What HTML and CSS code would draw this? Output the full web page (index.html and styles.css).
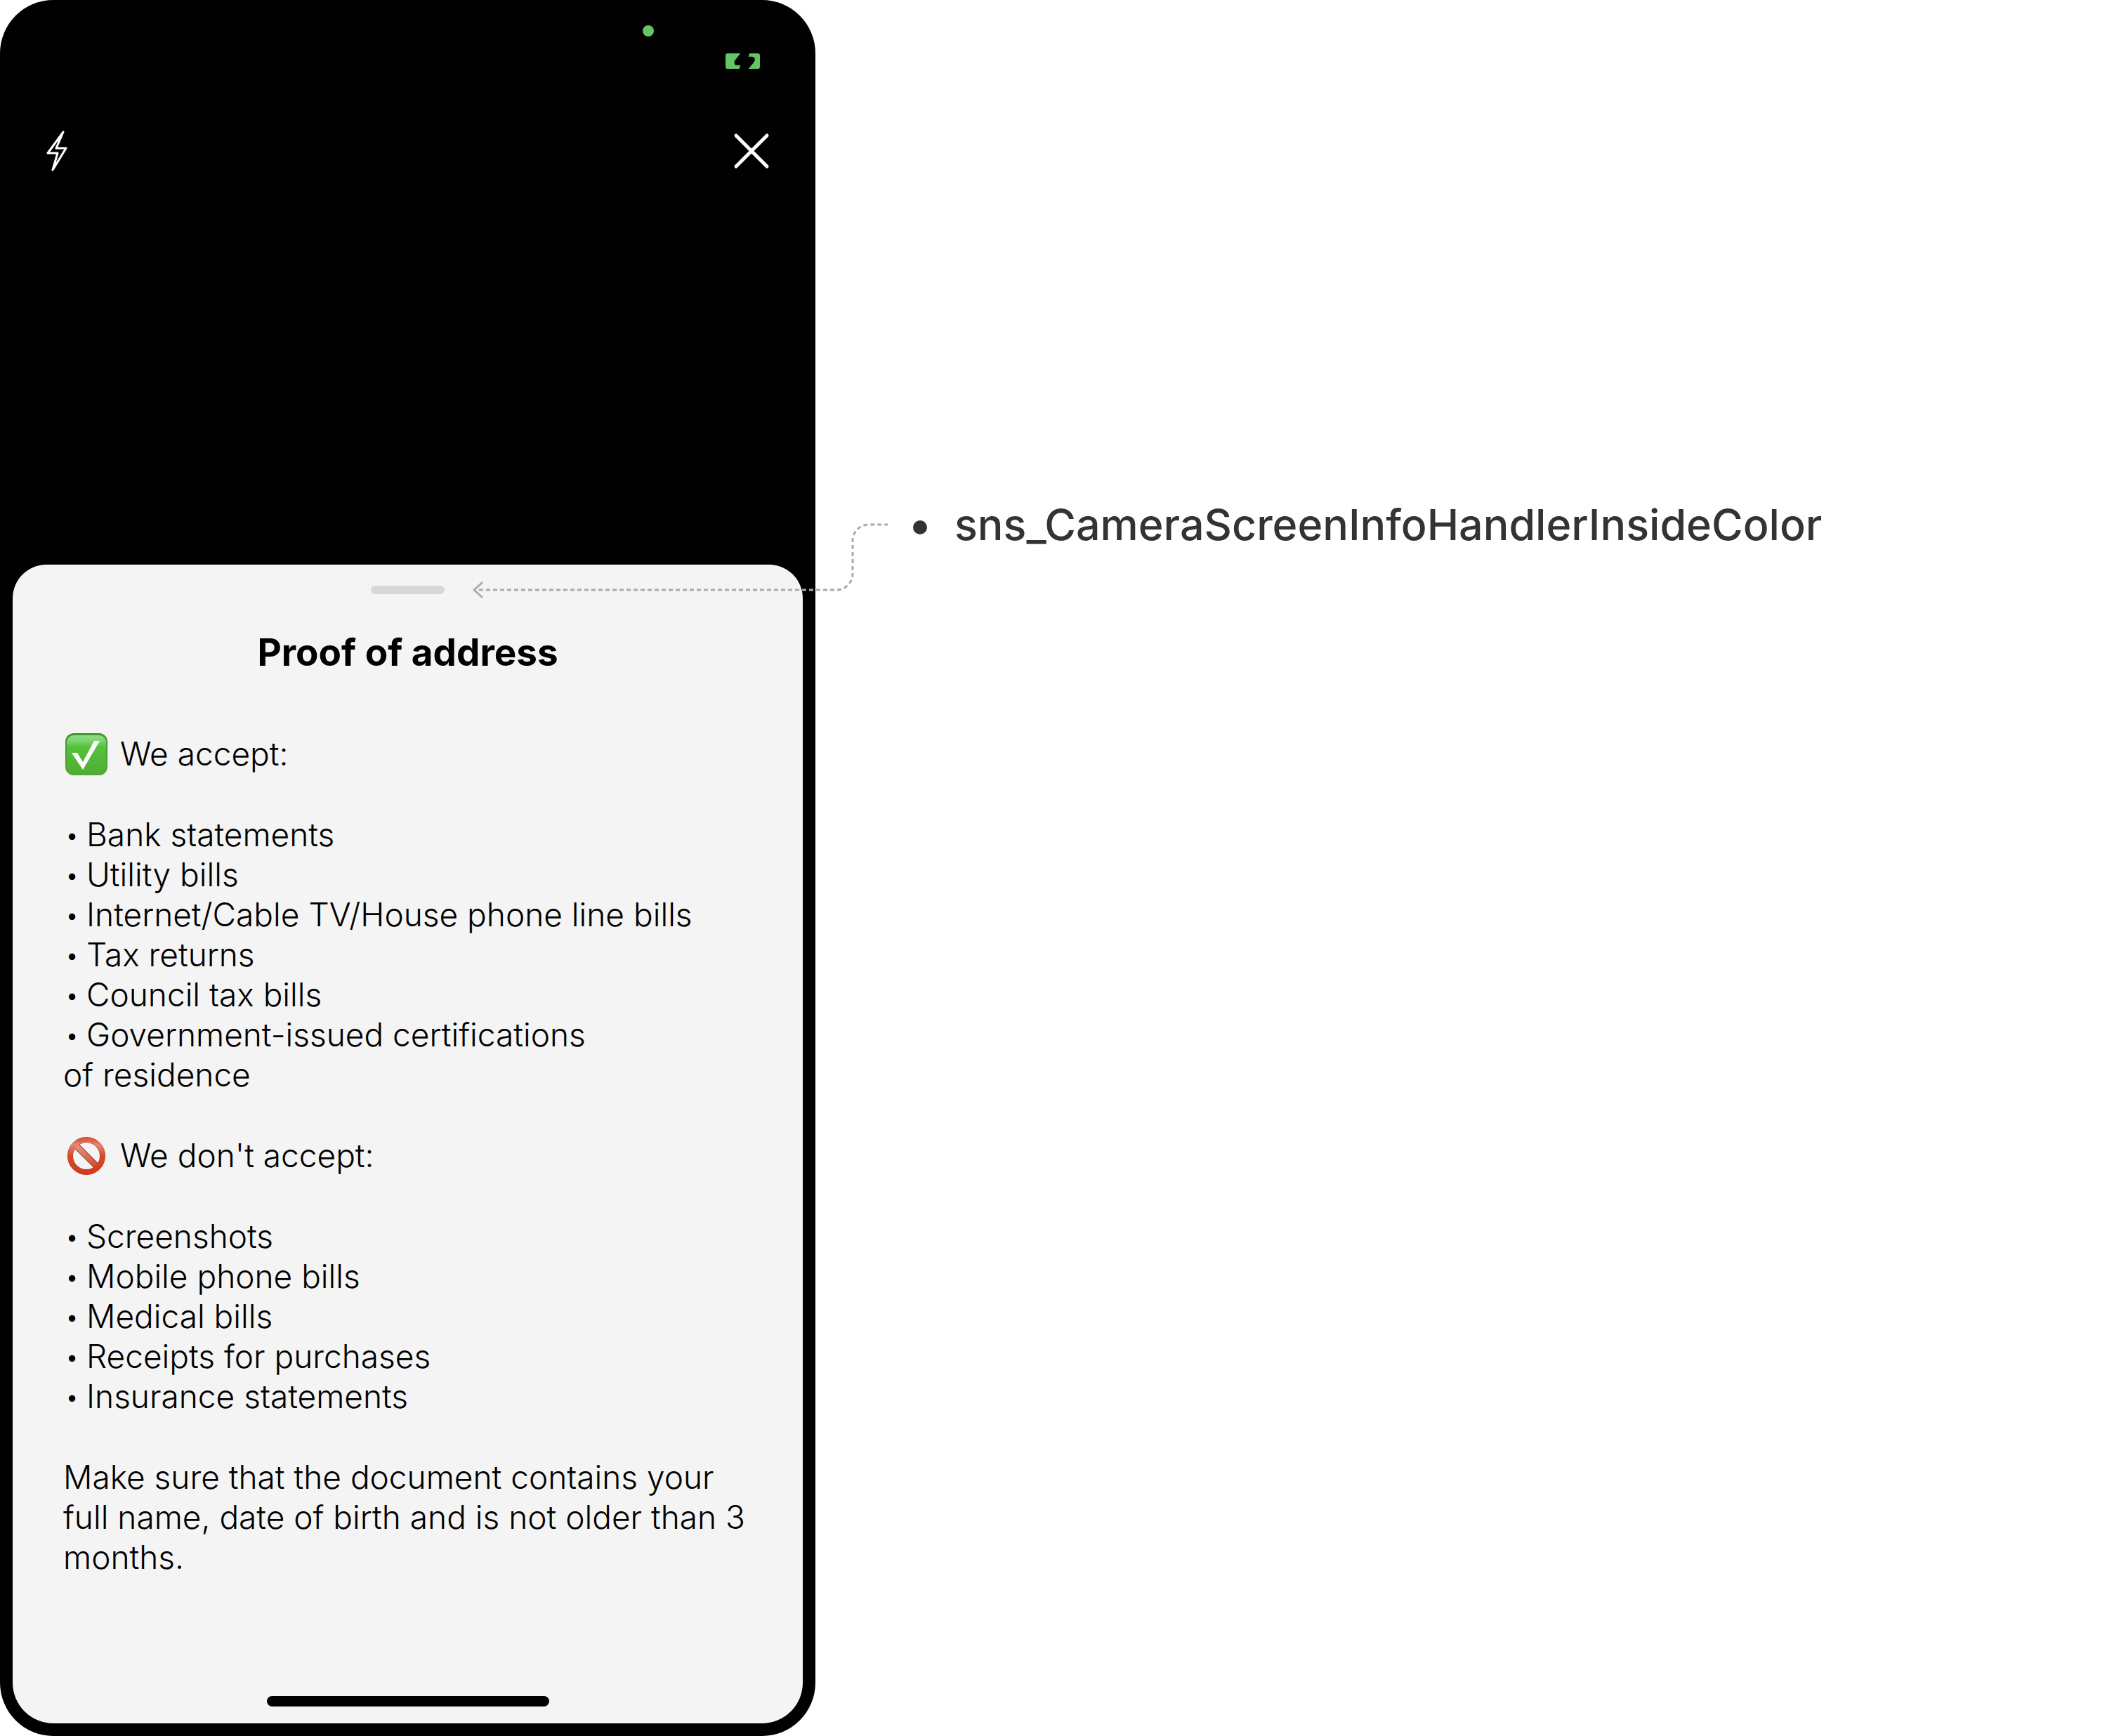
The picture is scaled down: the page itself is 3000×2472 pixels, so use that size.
FILE: index.html
```html
<!DOCTYPE html>
<html lang="en">
<head>
<meta charset="utf-8">
<title>Proof of address</title>
<link rel="stylesheet" href="styles.css">
</head>
<body>
<main class="page">
  <section class="phone">
    <header class="camera">
      <span class="camera-dot"></span>
      <svg class="battery" viewBox="0 0 147 66" aria-hidden="true">
        <path d="M10 0H64L41 29C34 39 38 51 50 51H64L59 66H10Q0 66 0 56V10Q0 0 10 0Z"/>
        <path d="M103 0H137Q147 0 147 10V56Q147 66 137 66H98L121 38C130 27 126 14 112 14H98Z"/>
      </svg>
      <div class="toolbar">
        <button class="tool" type="button" aria-label="Flash">
          <svg class="flash" viewBox="0 0 30 58" aria-hidden="true"><path d="M24 2L2 32H16L9 56L28 25H14Z"/></svg>
        </button>
        <button class="tool" type="button" aria-label="Close">
          <svg class="close" viewBox="0 0 48 48" aria-hidden="true"><path d="M2 2L46 46M46 2L2 46"/></svg>
        </button>
      </div>
    </header>
    <article class="sheet">
      <div class="handle"></div>
      <h1 class="title">Proof of address</h1>
      <div class="info">
        <h2 class="lead">
          <svg class="mark" viewBox="0 0 60 60" aria-hidden="true">
            <defs>
              <linearGradient id="green" x1="0" y1="0" x2="0" y2="1">
                <stop offset="0" stop-color="#8fdd84"/><stop offset=".14" stop-color="#7ed572"/><stop offset=".3" stop-color="#55c13b"/><stop offset="1" stop-color="#4fae32"/>
              </linearGradient>
              <linearGradient id="rim" x1="0" y1="0" x2="0" y2="1">
                <stop offset="0" stop-color="#3f9a2c"/><stop offset="1" stop-color="#4daa33"/>
              </linearGradient>
            </defs>
            <rect width="60" height="60" rx="12" fill="url(#rim)"/>
            <rect x="2" y="3" width="56" height="55" rx="10" fill="url(#green)"/>
            <path d="M9 28H17L25 41L41 11H49L25 52Z" fill="#fff"/>
          </svg>
          We accept:
        </h2>
        <ul class="items">
          <li><span class="dot">•</span>Bank statements</li>
          <li><span class="dot">•</span>Utility bills</li>
          <li><span class="dot">•</span>Internet/Cable TV/House phone line bills</li>
          <li><span class="dot">•</span>Tax returns</li>
          <li><span class="dot">•</span>Council tax bills</li>
          <li><span class="dot">•</span>Government-issued certifications<br>of residence</li>
        </ul>
        <h2 class="lead">
          <svg class="mark" viewBox="0 0 60 60" aria-hidden="true">
            <defs>
              <linearGradient id="red" x1="0" y1="0" x2="0" y2="1">
                <stop offset="0" stop-color="#e05a3f"/><stop offset=".15" stop-color="#e88572"/><stop offset=".5" stop-color="#d6492b"/><stop offset="1" stop-color="#d53a1b"/>
              </linearGradient>
              <linearGradient id="bar" x1="0" y1="0" x2="1" y2="1">
                <stop offset="0" stop-color="#e59483"/><stop offset="1" stop-color="#cf4a30"/>
              </linearGradient>
            </defs>
            <circle cx="30" cy="30" r="23" fill="none" stroke="#a83820" stroke-width="8"/>
            <path d="M14 14L46 46" stroke="#a83820" stroke-width="9"/>
            <path d="M14 14L46 46" stroke="url(#bar)" stroke-width="7"/>
            <circle cx="30" cy="30" r="23" fill="none" stroke="url(#red)" stroke-width="7"/>
          </svg>
          We don't accept:
        </h2>
        <ul class="items">
          <li><span class="dot">•</span>Screenshots</li>
          <li><span class="dot">•</span>Mobile phone bills</li>
          <li><span class="dot">•</span>Medical bills</li>
          <li><span class="dot">•</span>Receipts for purchases</li>
          <li><span class="dot">•</span>Insurance statements</li>
        </ul>
        <p class="note">Make sure that the document contains your full name, date of birth and is not older than 3 months.</p>
      </div>
      <div class="home"></div>
    </article>
  </section>
  <ul class="tokens">
    <li class="token"><span class="bullet"></span>sns_CameraScreenInfoHandlerInsideColor</li>
  </ul>
  <svg class="connector" viewBox="0 0 596 108" aria-hidden="true">
    <path class="line" d="M9 95H518A23 23 0 0 0 541 72V25A23 23 0 0 1 564 2H591"/>
    <path class="arrow" d="M13 85L2 95L13 105"/>
  </svg>
</main>
</body>
</html>
```
FILE: styles.css
```css
* {
  box-sizing: border-box;
}

body {
  margin: 0;
  background: #fff;
  color: #000;
  font-family: Inter, "Liberation Sans", sans-serif;
}

h1, h2, p, ul {
  margin: 0;
  padding: 0;
}

ul {
  list-style: none;
}

.page {
  position: relative;
  display: grid;
  grid-template-columns: 38.7% 1fr;
  min-height: 100vh;
}

.phone {
  display: flex;
  flex-direction: column;
  padding: 0 18px 18px;
  border-radius: 76px;
  background: #000;
}

.camera {
  display: flex;
  flex-direction: column;
  align-items: flex-end;
  min-height: 804px;
  padding-top: 36px;
}

.camera-dot {
  width: 16px;
  height: 16px;
  margin-right: 212px;
  border-radius: 50%;
  background: #65c466;
}

.battery {
  width: 49px;
  height: 22px;
  margin: 24px 61px 0 0;
  fill: #65c466;
}

.toolbar {
  display: flex;
  align-self: stretch;
  align-items: center;
  justify-content: space-between;
  margin-top: 88px;
  padding: 0 49px 0 48px;
}

.tool {
  display: flex;
  padding: 0;
  border: 0;
  background: none;
}

.flash, .close {
  fill: none;
  stroke: #fff;
  stroke-linecap: round;
  stroke-linejoin: round;
}

.flash {
  width: 30px;
  height: 58px;
  stroke-width: 3;
}

.close {
  width: 48px;
  height: 48px;
  stroke-width: 5;
  overflow: visible;
}

.sheet {
  display: flex;
  flex: 1;
  flex-direction: column;
  align-items: center;
  padding: 30px 0 24px;
  border-radius: 48px 48px 58px 58px;
  background: #f4f4f4;
}

.handle {
  width: 105px;
  height: 12px;
  border-radius: 6px;
  background: #d8d8d8;
}

.title {
  margin-top: 51px;
  font-size: 53px;
  font-weight: 700;
  line-height: 64px;
}

.info {
  display: flex;
  flex-direction: column;
  gap: 58px;
  align-self: stretch;
  margin-top: 84px;
  padding: 0 72px;
  font-size: 46px;
  font-weight: 300;
  line-height: 57px;
}

.lead {
  display: flex;
  align-items: center;
  gap: 18px;
  height: 57px;
  padding-left: 3px;
  font-size: 46px;
  font-weight: 300;
}

.mark {
  width: 60px;
  height: 60px;
}

.dot {
  display: inline-block;
  width: 33px;
  padding-left: 3px;
  font-size: 34px;
  line-height: 34px;
  vertical-align: 4px;
}

.home {
  width: 402px;
  height: 15px;
  margin-top: auto;
  border-radius: 8px;
  background: #000;
}

.tokens {
  padding: 707px 0 0 139px;
}

.token {
  display: flex;
  align-items: center;
  gap: 39px;
  color: #333;
  font-size: 61px;
  font-weight: 500;
  line-height: 80px;
}

.bullet {
  width: 20px;
  height: 20px;
  margin-top: 8px;
  border-radius: 50%;
  background: #333;
}

.connector {
  position: absolute;
  top: 745px;
  left: 673px;
  width: 596px;
  height: 108px;
  fill: none;
  stroke: #aaa;
  stroke-width: 3;
}

.line {
  stroke-dasharray: 6 4;
}

.arrow {
  stroke-linecap: round;
  stroke-linejoin: round;
}
```
